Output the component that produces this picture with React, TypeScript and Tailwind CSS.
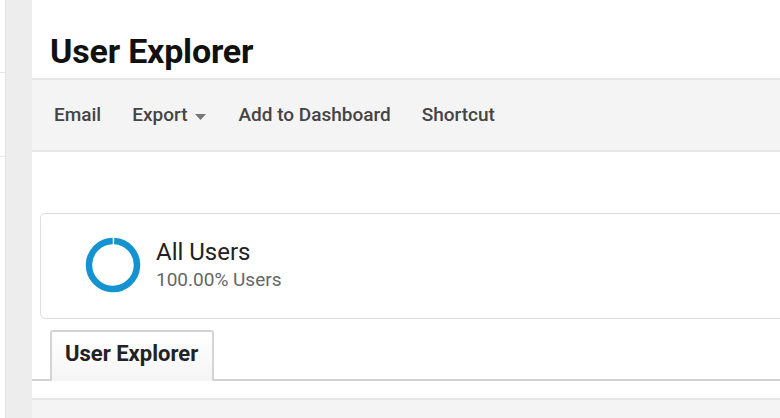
import React from "react";

export default function App() {
  const font = { fontFamily: "Roboto, 'Noto Sans', Arial, sans-serif" };
  return (
    <div className="w-[780px] h-[418px] flex bg-white overflow-hidden" style={font}>
      {/* left edge */}
      <div className="w-[6px] h-full flex flex-col bg-white border-r border-[#e2e2e2]">
        <div className="h-[73px] border-b border-[#e6e6e6]" />
        <div className="h-[84px] border-b border-[#e6e6e6]" />
      </div>
      <div className="w-[26px] h-full bg-[#ededed]" />

      {/* main */}
      <div className="flex-1 flex flex-col bg-white">
        <div className="h-[78px] flex items-end pl-[18px] pb-[7px]">
          <h1 className="text-[34px] leading-[40px] font-bold text-[#111] tracking-[-0.2px]">User Explorer</h1>
        </div>
        <div className="h-[74px] border-y-2 border-[#e6e6e6] bg-[#f4f4f4] flex items-center pl-[22px] pt-[1px] text-[19px] font-medium text-[#444]">
          <span>Email</span>
          <span className="ml-[31px] flex items-center">
            Export
            <svg width="11" height="6" viewBox="0 0 11 6" className="ml-[8px] mt-[2px]">
              <path d="M0 0 L11 0 L5.5 6 Z" fill="#777" />
            </svg>
          </span>
          <span className="ml-[32px]">Add to Dashboard</span>
          <span className="ml-[31px]">Shortcut</span>
        </div>
        <div className="h-[61px]" />
        <div className="ml-[8px] -mr-[6px] h-[106px] border border-[#dedede] rounded-[5px] flex items-center pl-[43px]">
          <svg width="58" height="58" viewBox="0 0 58 58" className="-mt-[3px]">
            <circle
              cx="29"
              cy="29"
              r="24"
              fill="none"
              stroke="#1393cf"
              strokeWidth="6.5"
              strokeDasharray="148.3 2.5"
              transform="rotate(-87.2 29 29)"
            />
          </svg>
          <div className="ml-[14px] -mt-[3px] flex flex-col">
            <span className="text-[24px] leading-[28px] text-[#222]">All Users</span>
            <span className="text-[19px] leading-[24px] mt-[2px] text-[#666]">100.00% Users</span>
          </div>
        </div>
        <div className="h-[11px]" />
        <div className="h-[51px] border-b-2 border-[#d2d2d2] flex items-end pl-[18px]">
          <div className="w-[164px] h-[51px] -mb-[2px] border-2 border-b-0 border-[#d4d4d4] rounded-t-[3px] bg-gradient-to-b from-white to-[#f5f5f5] flex items-center pl-[13px] pb-[6px]">
            <span className="text-[22px] font-bold text-[#222]">User Explorer</span>
          </div>
        </div>
        <div className="h-[17px]" />
        <div className="flex-1 border-t-2 border-[#e6e6e6] bg-[#f4f4f4]" />
      </div>
    </div>
  );
}
